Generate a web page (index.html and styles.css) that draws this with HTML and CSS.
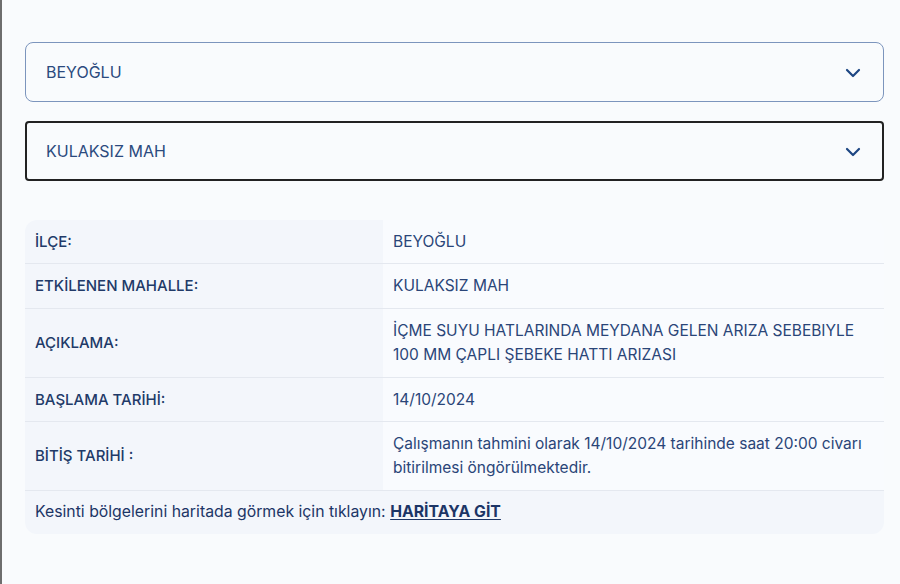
FILE: index.html
```html
<!DOCTYPE html>
<html lang="tr">
<head>
	<meta charset="UTF-8">
	<title>Arıza Kesinti Bilgisi</title>
	<link rel="stylesheet" href="styles.css">
</head>
<body>
	<div class="sayfa">
		<div class="secim">
			<span>BEYOĞLU</span>
			<svg class="ok" width="16" height="10" viewBox="0 0 16 10"><path d="M2 2 L8 8 L14 2" fill="none" stroke="#1d4683" stroke-width="2.2" stroke-linecap="round" stroke-linejoin="round"/></svg>
		</div>
		<div class="secim aktif">
			<span>KULAKSIZ MAH</span>
			<svg class="ok" width="16" height="10" viewBox="0 0 16 10"><path d="M2 2 L8 8 L14 2" fill="none" stroke="#1d4683" stroke-width="2.2" stroke-linecap="round" stroke-linejoin="round"/></svg>
		</div>

		<table class="bilgi">
			<tr class="kisa">
				<th>İLÇE:</th>
				<td>BEYOĞLU</td>
			</tr>
			<tr>
				<th>ETKİLENEN MAHALLE:</th>
				<td>KULAKSIZ MAH</td>
			</tr>
			<tr>
				<th>AÇIKLAMA:</th>
				<td>İÇME SUYU HATLARINDA MEYDANA GELEN ARIZA SEBEBIYLE<br>100 MM ÇAPLI ŞEBEKE HATTI ARIZASI</td>
			</tr>
			<tr class="kisa">
				<th>BAŞLAMA TARİHİ:</th>
				<td>14/10/2024</td>
			</tr>
			<tr>
				<th>BİTİŞ TARİHİ :</th>
				<td>Çalışmanın tahmini olarak 14/10/2024 tarihinde saat 20:00 civarı<br>bitirilmesi öngörülmektedir.</td>
			</tr>
			<tr class="harita">
				<td colspan="2">Kesinti bölgelerini haritada görmek için tıklayın: <a href="#">HARİTAYA GİT</a></td>
			</tr>
		</table>
	</div>
</body>
</html>
```

FILE: styles.css
```css
*{
	margin:0;
	padding:0;
	box-sizing: border-box;
}
body{
	font-family: Inter, "Noto Sans", sans-serif;
	font-size: 15.5px;
	background: #f9fbfd;
	color: #1f3a6b;
}
.sayfa{
	min-height: 584px;
	border-left: 2px solid #6e6e6e;
	padding: 42px 16px 0 23px;
}
.secim{
	display: flex;
	align-items: center;
	justify-content: space-between;
	height: 60px;
	padding: 0 22px 0 20px;
	border: 1px solid #7c95bd;
	border-radius: 8px;
	font-size: 16px;
	color: #2b4a7e;
	margin-bottom: 19px;
}
.secim.aktif{
	border: 2px solid #222;
	border-radius: 4px;
	padding: 0 21px 0 19px;
	margin-bottom: 39px;
}
.ok{
	display: block;
	margin-top: 2px;
}
.bilgi{
	width: 100%;
	border-collapse: separate;
	border-spacing: 0;
	border-radius: 12px;
	overflow: hidden;
	background: #f9fbfe;
}
.bilgi th, .bilgi td{
	text-align: left;
	padding: 10px;
	line-height: 24px;
	border-bottom: 1px solid #e4e8ef;
	vertical-align: middle;
}
.bilgi .kisa th, .bilgi .kisa td{
	padding-bottom: 9px;
}
.bilgi th{
	width: 358px;
	font-size: 15px;
	font-weight: 500;
	background: #f3f6fb;
	color: #213a68;
}
.bilgi td{
	color: #2a4578;
}
.bilgi tr:last-child td{
	border-bottom: none;
	background: #f3f6fb;
	color: #1c3566;
	font-size: 15.8px;
	padding: 9px 10px 10px;
}
.harita a{
	color: #1c3566;
	font-weight: 700;
	text-decoration: underline;
	text-decoration-thickness: 1px;
	text-underline-offset: 2px;
}
```
